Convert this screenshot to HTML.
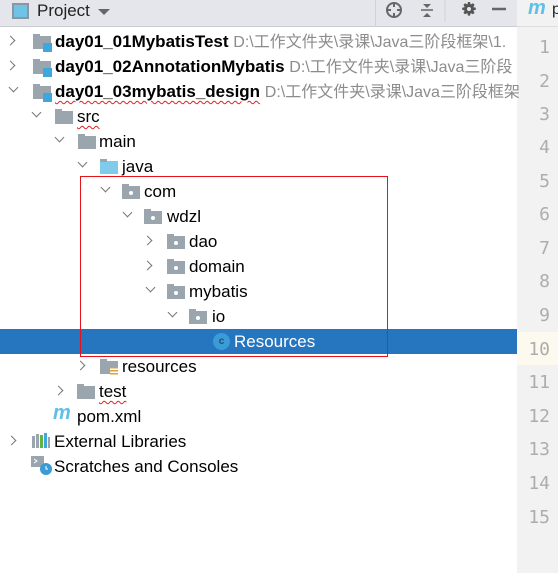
<!DOCTYPE html>
<html><head><meta charset="utf-8"><style>
*{margin:0;padding:0;box-sizing:border-box}
body{width:558px;height:573px;overflow:hidden;background:#fff;font-family:"Liberation Sans","Noto Sans CJK SC",sans-serif;font-size:17px;color:#000;position:relative}
.hdr{position:absolute;left:0;top:0;width:517px;height:27px;background:#e4e6eb;border-bottom:1px solid #c9ccd2}
.gut{position:absolute;left:517px;top:0;width:41px;height:573px;background:#f2f2f2}
.gh{position:absolute;left:517px;top:0;width:41px;height:27px;background:#f2f2f2;border-bottom:1px solid #ddd}
.ln{position:absolute;left:517px;width:33px;text-align:right;font-family:"DejaVu Sans Mono","Liberation Mono",monospace;font-size:18px;color:#adadad;height:33px;line-height:33px}
.r{position:absolute;height:25px;line-height:25px;white-space:nowrap}
.a{position:absolute;width:7px;height:7px;border-right:1.3px solid #777;border-bottom:1.3px solid #777}
.ar{transform:rotate(-45deg)}
.ad{transform:rotate(45deg)}
.f{position:absolute;width:18px;height:13px;background:#9aa5ad}
.f:before{content:"";position:absolute;left:0;top:-2px;width:7px;height:3px;background:#9aa5ad}
.pk:after{content:"";position:absolute;left:7px;top:5px;width:4px;height:4px;border-radius:2px;background:#fff}
.p{color:#8c8c8c;font-size:16px}
.sq{text-decoration:underline wavy #e02020;text-decoration-thickness:1px;text-underline-offset:3px}
</style></head><body>
<div class="hdr"></div>
<div style="position:absolute;left:12px;top:3px;width:17px;height:16px;border:2px solid #8a96a0;background:#6fc3e6"></div>
<div style="position:absolute;left:37px;top:0;line-height:22px;font-size:17px;color:#222">Project</div>
<div style="position:absolute;left:98px;top:9px;border-left:6px solid transparent;border-right:6px solid transparent;border-top:6px solid #666"></div>
<div style="position:absolute;left:375px;top:0;width:1px;height:27px;background:#cfd2d6"></div>
<svg style="position:absolute;left:383px;top:0" width="130" height="24" viewBox="0 0 130 24">
<circle cx="11" cy="10" r="7" fill="none" stroke="#666" stroke-width="2"/><path d="M11 3v4M11 13v4M4 10h4M14 10h4" stroke="#666" stroke-width="2"/>
<path d="M38 10h12" stroke="#666" stroke-width="1.5"/><path d="M40 4h8l-4 4zM40 17h8l-4-4z" fill="#666"/>
<line x1="62" y1="0" x2="62" y2="22" stroke="#cfd2d6"/>
<path d="M85 2l2 0 .7 2.5 2.3-1.2 1.5 1.5-1.2 2.3 2.5.7v2l-2.5.7 1.2 2.3-1.5 1.5-2.3-1.2-.7 2.5h-2l-.7-2.5-2.3 1.2-1.5-1.5 1.2-2.3-2.5-.7v-2l2.5-.7-1.2-2.3 1.5-1.5 2.3 1.2z" fill="#555"/><circle cx="86" cy="9" r="2" fill="#e4e6eb"/>
<path d="M109 9h14" stroke="#666" stroke-width="2.5"/>
</svg>
<div class="gut"></div><div class="gh"></div>
<div style="position:absolute;left:528px;top:-3px;font-size:20px;font-weight:bold;font-style:italic;color:#5ec0e8">m</div>
<div style="position:absolute;left:552px;top:1px;font-size:16px;color:#222">p</div>
<div style="position:absolute;left:517px;top:332px;width:41px;height:33px;background:#fcfaee"></div>
<div class="ln" style="top:31px">1</div><div class="ln" style="top:65px">2</div><div class="ln" style="top:98px">3</div><div class="ln" style="top:131px">4</div><div class="ln" style="top:165px">5</div><div class="ln" style="top:198px">6</div><div class="ln" style="top:232px">7</div><div class="ln" style="top:265px">8</div><div class="ln" style="top:299px">9</div><div class="ln" style="top:333px">10</div><div class="ln" style="top:366px">11</div><div class="ln" style="top:400px">12</div><div class="ln" style="top:433px">13</div><div class="ln" style="top:467px">14</div><div class="ln" style="top:501px">15</div>

<div style="position:absolute;left:0;top:329px;width:517px;height:25px;background:#2675bf"></div>

<div class="a ar" style="left:7px;top:37px"></div>
<div class="f" style="left:33px;top:36px"></div><div style="position:absolute;left:43px;top:43px;width:9px;height:9px;background:#3ea8de"></div>
<div class="r" style="left:55px;top:29px"><b>day01_01MybatisTest</b> <span class="p">D:\工作文件夹\录课\Java三阶段框架\1.</span></div>
<div class="a ar" style="left:7px;top:62px"></div>
<div class="f" style="left:33px;top:61px"></div><div style="position:absolute;left:43px;top:68px;width:9px;height:9px;background:#3ea8de"></div>
<div class="r" style="left:55px;top:54px"><b>day01_02AnnotationMybatis</b> <span class="p">D:\工作文件夹\录课\Java三阶段</span></div>
<div class="a ad" style="left:10px;top:84px"></div>
<div class="f" style="left:33px;top:86px"></div><div style="position:absolute;left:43px;top:93px;width:9px;height:9px;background:#3ea8de"></div>
<div class="r" style="left:55px;top:79px"><b class="sq">day01_03mybatis_design</b> <span class="p">D:\工作文件夹\录课\Java三阶段框架</span></div>

<div class="a ad" style="left:33px;top:109px"></div>
<div class="f" style="left:55px;top:111px"></div>
<div class="r" style="left:77px;top:104px"><span class="sq">src</span></div>
<div class="a ad" style="left:56px;top:134px"></div>
<div class="f" style="left:78px;top:136px"></div>
<div class="r" style="left:99px;top:129px">main</div>
<div class="a ad" style="left:79px;top:159px"></div>
<div class="f" style="left:100px;top:161px;background:#7fcbea"></div>
<div class="r" style="left:122px;top:154px">java</div>
<div class="a ad" style="left:102px;top:184px"></div>
<div class="f pk" style="left:122px;top:186px"></div>
<div class="r" style="left:144px;top:179px">com</div>
<div class="a ad" style="left:124px;top:209px"></div>
<div class="f pk" style="left:144px;top:211px"></div>
<div class="r" style="left:167px;top:204px">wdzl</div>
<div class="a ar" style="left:144px;top:237px"></div>
<div class="f pk" style="left:167px;top:236px"></div>
<div class="r" style="left:189px;top:229px">dao</div>
<div class="a ar" style="left:144px;top:262px"></div>
<div class="f pk" style="left:167px;top:261px"></div>
<div class="r" style="left:189px;top:254px">domain</div>
<div class="a ad" style="left:147px;top:284px"></div>
<div class="f pk" style="left:167px;top:286px"></div>
<div class="r" style="left:189px;top:279px">mybatis</div>
<div class="a ad" style="left:169px;top:309px"></div>
<div class="f pk" style="left:189px;top:311px"></div>
<div class="r" style="left:212px;top:304px">io</div>
<div style="position:absolute;left:213px;top:333px;width:17px;height:17px;border-radius:50%;background:#3a9bd6;color:#1f4e78;font-size:10px;font-weight:bold;text-align:center;line-height:17px">c</div>
<div class="r" style="left:234px;top:329px;color:#fff">Resources</div>
<div class="a ar" style="left:77px;top:362px"></div>
<div class="f" style="left:100px;top:361px"></div><div style="position:absolute;left:110px;top:367px;width:8px;height:9px;background:repeating-linear-gradient(#d8a040 0 1.5px,#fff 1.5px 3px)"></div>
<div class="r" style="left:122px;top:354px">resources</div>
<div class="a ar" style="left:55px;top:387px"></div>
<div class="f" style="left:77px;top:386px"></div>
<div class="r" style="left:99px;top:379px"><span class="sq">test</span></div>
<div style="position:absolute;left:53px;top:402px;font-size:20px;font-weight:bold;font-style:italic;color:#5ec0e8;line-height:22px">m</div>
<div class="r" style="left:77px;top:404px">pom.xml</div>
<div class="a ar" style="left:8px;top:437px"></div>
<svg style="position:absolute;left:32px;top:433px" width="18" height="16"><rect x="0" y="3" width="3" height="12" fill="#9aa5ad"/><rect x="4" y="1" width="3" height="14" fill="#9aa5ad"/><rect x="8" y="2" width="3" height="13" fill="#62b543"/><rect x="12" y="0" width="3" height="15" fill="#40a8e0"/><rect x="16" y="4" width="2" height="11" fill="#9aa5ad"/></svg>
<div class="r" style="left:54px;top:429px">External Libraries</div>
<svg style="position:absolute;left:31px;top:456px" width="22" height="20"><rect x="0" y="0" width="13" height="11" fill="#9aa5ad"/><path d="M3 3l3 2-3 2" stroke="#fff" fill="none"/><circle cx="15" cy="13" r="6" fill="#3a9bd6"/><path d="M15 10v3h2" stroke="#fff" fill="none"/></svg>
<div class="r" style="left:54px;top:454px">Scratches and Consoles</div>

<div style="position:absolute;left:80px;top:176px;width:308px;height:181px;border:1px solid #e8121b"></div>
</body></html>
